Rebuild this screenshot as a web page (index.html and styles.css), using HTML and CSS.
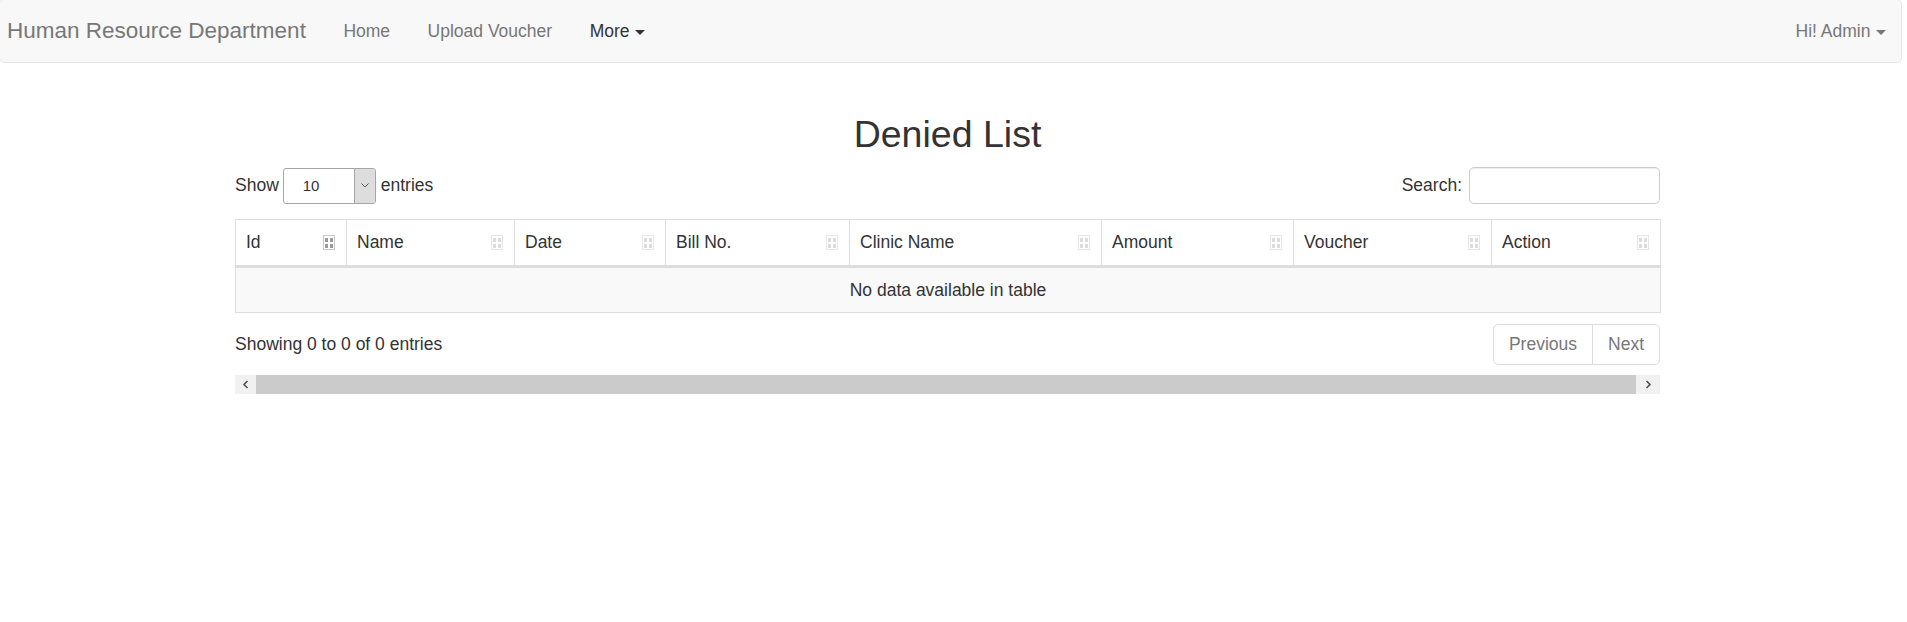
FILE: index.html
```html
<!DOCTYPE html>
<html lang="en">
<head>
<meta charset="utf-8">
<title>Denied List</title>
<link rel="stylesheet" href="styles.css">
</head>
<body>
<nav class="navbar">
  <a class="brand" href="#">Human Resource Department</a>
  <ul class="nav">
    <li><a href="#">Home</a></li>
    <li><a href="#">Upload Voucher</a></li>
    <li><a href="#" class="dark">More <span class="caret"></span></a></li>
  </ul>
  <ul class="nav nav-right">
    <li><a href="#">Hi! Admin <span class="caret"></span></a></li>
  </ul>
</nav>

<main class="container">
  <h2 class="title">Denied List</h2>

  <div class="dt-top">
    <label class="length">Show
      <span class="select"><span class="select-val">10</span><span class="select-btn"><svg width="8" height="5" viewBox="0 0 8 5"><path d="M0.5 0.5 L4 4 L7.5 0.5" fill="none" stroke="#555" stroke-width="1"/></svg></span></span>
      entries</label>
    <label class="search">Search:<span class="search-input"></span></label>
  </div>

  <table class="table">
    <colgroup>
      <col class="c1"><col class="c2"><col class="c3"><col class="c4"><col class="c5"><col class="c6"><col class="c7"><col class="c8">
    </colgroup>
    <thead>
      <tr>
        <th><div class="th-in"><span>Id</span><span class="sort sorted"><i></i><i></i><i></i><i></i></span></div></th>
        <th><div class="th-in"><span>Name</span><span class="sort"><i></i><i></i><i></i><i></i></span></div></th>
        <th><div class="th-in"><span>Date</span><span class="sort"><i></i><i></i><i></i><i></i></span></div></th>
        <th><div class="th-in"><span>Bill No.</span><span class="sort"><i></i><i></i><i></i><i></i></span></div></th>
        <th><div class="th-in"><span>Clinic Name</span><span class="sort"><i></i><i></i><i></i><i></i></span></div></th>
        <th><div class="th-in"><span>Amount</span><span class="sort"><i></i><i></i><i></i><i></i></span></div></th>
        <th><div class="th-in"><span>Voucher</span><span class="sort"><i></i><i></i><i></i><i></i></span></div></th>
        <th><div class="th-in"><span>Action</span><span class="sort"><i></i><i></i><i></i><i></i></span></div></th>
      </tr>
    </thead>
    <tbody>
      <tr><td colspan="8" class="empty">No data available in table</td></tr>
    </tbody>
  </table>

  <div class="dt-bottom">
    <div class="info">Showing 0 to 0 of 0 entries</div>
    <ul class="pagination">
      <li><a href="#">Previous</a></li>
      <li><a href="#">Next</a></li>
    </ul>
  </div>

  <div class="hscroll">
    <span class="sb-btn sb-left"><svg width="8" height="9" viewBox="0 0 8 9"><path d="M5.5 1 L2 4.5 L5.5 8" fill="none" stroke="#505050" stroke-width="1.6"/></svg></span>
    <span class="sb-thumb"></span>
    <span class="sb-btn sb-right"><svg width="8" height="9" viewBox="0 0 8 9"><path d="M2.5 1 L6 4.5 L2.5 8" fill="none" stroke="#505050" stroke-width="1.6"/></svg></span>
  </div>
</main>
</body>
</html>
```

FILE: styles.css
```css
* { box-sizing: border-box; }

body {
  margin: 0;
  font-family: "Liberation Sans", Arial, Helvetica, sans-serif;
  font-size: 17.5px;
  line-height: 25px;
  color: #333;
  background: #fff;
}

a { text-decoration: none; }

.navbar {
  display: flex;
  align-items: stretch;
  height: 64px;
  margin: -1px 5px 0 -1px;
  background: #f8f8f8;
  border: 1px solid #e7e7e7;
  border-radius: 5px;
}

.brand {
  padding: 0 18.75px 0 7px;
  font-size: 22.5px;
  line-height: 62px;
  color: #777;
}

.nav {
  display: flex;
  list-style: none;
  margin: 0;
  padding: 0;
}

.nav a {
  display: block;
  padding: 0 18.75px;
  line-height: 62px;
  color: #777;
}

.nav a.dark { color: #333; }

.nav-right { margin-left: auto; margin-right: -4px; }

.caret {
  display: inline-block;
  width: 0;
  height: 0;
  margin-left: 1px;
  vertical-align: middle;
  border-top: 5px solid;
  border-left: 5px solid transparent;
  border-right: 5px solid transparent;
}

.container {
  width: 1425px;
  margin-left: 235px;
}

.title {
  margin: 51px 0 12px;
  font-size: 37.5px;
  font-weight: 500;
  line-height: 41.25px;
  text-align: center;
  color: #333;
}

.dt-top {
  display: flex;
  justify-content: space-between;
  align-items: center;
  height: 37px;
}

.length, .search {
  display: flex;
  align-items: center;
  font-weight: normal;
}

.select {
  display: flex;
  width: 93px;
  height: 36px;
  margin: 0 5px 0 4px;
  border: 1px solid #a6a6a6;
  border-radius: 3px;
  overflow: hidden;
  background: #fff;
}

.select-val {
  flex: 1;
  padding-left: 19px;
  font-size: 15px;
  line-height: 34px;
  color: #333;
}

.select-btn {
  display: flex;
  align-items: center;
  justify-content: center;
  width: 21px;
  background: #dddddd;
  border-left: 1px solid #a6a6a6;
}

.search-input {
  display: block;
  width: 191px;
  height: 37px;
  margin-left: 7px;
  border: 1px solid #ccc;
  border-radius: 5px;
  box-shadow: inset 0 1px 1px rgba(0,0,0,.075);
}

.table {
  width: 1425px;
  margin-top: 15px;
  border-collapse: collapse;
  table-layout: fixed;
  border: 1px solid #ddd;
}

.c1 { width: 111px; }
.c2 { width: 168px; }
.c3 { width: 151px; }
.c4 { width: 184px; }
.c5 { width: 252px; }
.c6 { width: 192px; }
.c7 { width: 198px; }
.c8 { width: 169px; }

.table th {
  padding: 10px 10px 10px 10px;
  font-weight: normal;
  text-align: left;
  border: 1px solid #ddd;
  border-bottom: 3px solid #ddd;
  line-height: 25px;
}

.th-in {
  display: flex;
  justify-content: space-between;
  align-items: center;
}

.sort {
  display: grid;
  grid-template-columns: 3px 3px;
  gap: 2px 2px;
  align-content: center;
  justify-content: center;
  width: 12px;
  height: 15px;
  margin-right: 1px;
  border: 1px solid #e6e6e6;
  background: #fff;
}

.sort i {
  display: block;
  height: 4px;
  background: #dcdcdc;
}

.sort.sorted { border-color: #c8c8c8; }
.sort.sorted i { background: #9a9a9a; }

.table td.empty {
  padding: 10px;
  line-height: 24px;
  text-align: center;
  background: #f9f9f9;
  border: 1px solid #ddd;
}

.dt-bottom {
  display: flex;
  justify-content: space-between;
  align-items: center;
  margin-top: 11px;
}

.pagination {
  display: flex;
  list-style: none;
  margin: 0;
  padding: 0;
}

.pagination a {
  display: block;
  padding: 7px 15px;
  line-height: 25px;
  color: #777;
  border: 1px solid #ddd;
  background: #fff;
}

.pagination li:first-child a {
  border-radius: 5px 0 0 5px;
}

.pagination li + li a {
  margin-left: -1px;
  border-radius: 0 5px 5px 0;
}

.hscroll {
  display: flex;
  height: 19px;
  margin-top: 10px;
  background: #f1f1f1;
}

.sb-btn {
  display: flex;
  align-items: center;
  justify-content: center;
  background: #f1f1f1;
}

.sb-left { width: 21px; }
.sb-right { width: 24px; }

.sb-thumb {
  flex: 1;
  background: #cbcbcb;
}
```
